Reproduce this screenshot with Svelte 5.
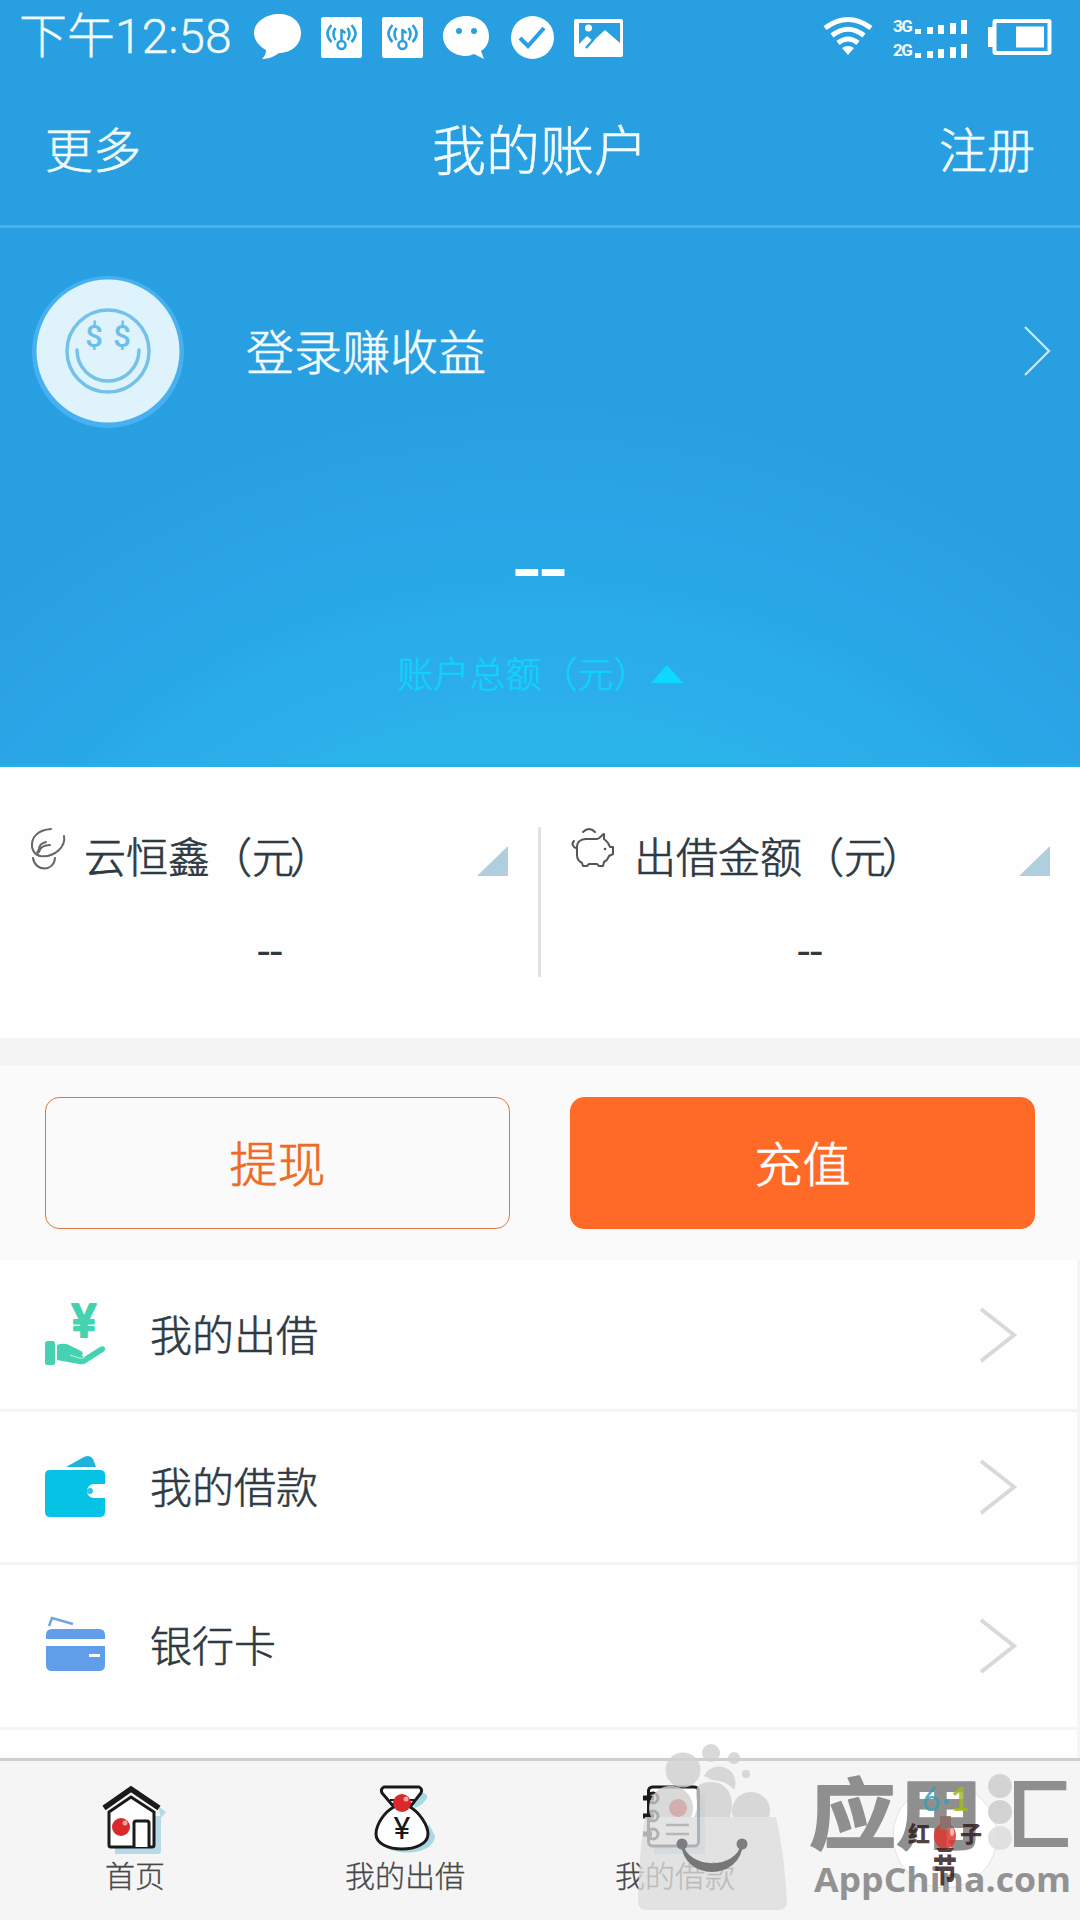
<script>
  const rows = [
    { key: 'lend', label: '我的出借' },
    { key: 'loan', label: '我的借款' },
    { key: 'card', label: '银行卡' }
  ];
  const bars = [5, 7, 9, 11, 14];
</script>

<div class="screen">
  <section class="hero">
    <div class="status">
      <span class="time">下午12:58</span>
      <svg class="notif" viewBox="250 10 376 54" width="376" height="54">
        <g fill="#fff">
          <path d="M279 14c13 0 22 8 22 19s-9 20-22 20c-4 3-10 6-17 6 3-3 4-6 4-9-7-4-12-10-12-17 0-11 12-19 25-19z" />
          <rect x="321" y="17" width="41" height="41" rx="2" />
          <rect x="382" y="17" width="41" height="41" rx="2" />
          <path d="M466 16c14 0 23 9 23 20 0 7-3 12-8 15l3 8-10-5c-3 1-5 2-8 2-13 0-23-9-23-20s10-20 23-20z" />
          <circle cx="532.500" cy="37.500" r="21.500" />
          <path fill-rule="evenodd" d="M576 19h45q2 0 2 2v34q0 2-2 2h-45q-2 0-2-2V21q0-2 2-2zm3 4v21l8-8 6 5 12-11 15 13V23z" />
          <circle cx="588.500" cy="28" r="3.500" />
        </g>
        {#each [341.5, 402.5] as x}
          <g class="hotspot" transform="translate({x} 45)">
            <circle r="4" />
            <path d="M0-4v-12M0-15l4 3M-6-17q-4 6 0 12M6-17q4 6 0 12M-10-20q-8 9 0 17M10-20q8 9 0 17" />
          </g>
        {/each}
        <g fill="#289fe1"><circle cx="459" cy="31" r="3" /><circle cx="474" cy="31" r="3" /></g>
        <path d="M520 38l8 8 16-18" fill="none" stroke="#289fe1" stroke-width="4" />
        <path d="M586 48l8-9" fill="none" stroke="#289fe1" stroke-width="2.500" />
      </svg>
      <svg class="wifi" viewBox="0 0 50 40" width="50" height="40">
        <g fill="none" stroke="#fff" stroke-width="5">
          <path d="M2 11Q25-6 48 11" /><path d="M9 18.500Q25 6 41 18.500" /><path d="M15 26Q25 18 35 26" />
        </g>
        <path d="M19 31q6-4 12 0l-6 7z" fill="#fff" />
      </svg>
      <div class="signals">
        {#each ['3G', '2G'] as net}
          <div class="signal">
            <span>{net}</span>
            {#each bars as h}<i style:height="{h}px"></i>{/each}
          </div>
        {/each}
      </div>
      <svg class="battery" viewBox="0 0 64 36" width="64" height="36">
        <rect x="6.500" y="2" width="55" height="32" rx="1" fill="none" stroke="#fff" stroke-width="4" />
        <path d="M0 8h5v20H0z M28 7.500h28v21H28z" fill="#fff" />
      </svg>
    </div>

    <header>
      <span class="side">更多</span>
      <h1>我的账户</h1>
      <span class="side end">注册</span>
    </header>

    <div class="user">
      <svg viewBox="0 0 156 156" width="156" height="156">
        <circle cx="78" cy="79" r="76" fill="#47b0f0" />
        <circle cx="78" cy="78" r="71.500" fill="#dff3fd" />
        <g fill="none" stroke="#74c2ea" stroke-width="3.500" stroke-linecap="round">
          <circle cx="78" cy="78" r="41" />
          <path d="M47 77a31 31 0 0 0 62 0" />
        </g>
        <g class="dollar"><text x="64" y="74">$</text><text x="92" y="74">$</text></g>
      </svg>
      <span class="login">登录赚收益</span>
      <svg viewBox="0 0 30 52" width="30" height="52"><path d="M2 2l24 24L2 50" fill="none" stroke="#c9eafc" stroke-width="2.200" /></svg>
    </div>

    <div class="total">--</div>
    <div class="total-label">账户总额（元）<i></i></div>
  </section>

  <section class="stats">
    <div class="stat">
      <div class="stat-head">
        <svg viewBox="28 826 46 50" width="46" height="50">
          <g fill="none" stroke="#666" stroke-width="2" stroke-linecap="round">
            <path d="M51 830C38 831 31 838 32 848c1 5 4 8 8 9 15 2 26-10 24-20" />
            <path d="M33 859c2 14 21 14 22 0M46 843c-5 1-7 4-7 8M50 846c-6 0-10 3-11 7M39 850c-3 4-1 7 1 7" />
          </g>
        </svg>
        <span>云恒鑫（<b>元</b>）</span>
      </div>
      <i class="corner"></i>
      <div class="stat-value">--</div>
    </div>
    <div class="stat second">
      <div class="stat-head">
        <svg viewBox="570 826 46 50" width="46" height="50">
          <g fill="none" stroke="#555" stroke-width="2" stroke-linecap="round" stroke-linejoin="round">
            <path d="M577 848c0-6 5-8 9-8h11c3 0 4-4 7-5v5c3 2 5 5 6 8h3v7l-4 2c-1 3-3 5-5 6l-1 4h-4l-2-2h-8l-2 2h-4l-1-3c-4-2-5-5-5-8z" />
            <path d="M583 833q6-6 12 0M574 842c-3 3-1 6 2 7" />
          </g>
          <circle cx="605" cy="850" r="1.300" fill="#555" />
        </svg>
        <span>出借金额（<b>元</b>）</span>
      </div>
      <i class="corner"></i>
      <div class="stat-value">--</div>
    </div>
  </section>

  <section class="actions">
    <button class="outline">提现</button>
    <button class="solid">充值</button>
  </section>

  <section class="list">
    {#each rows as row (row.key)}
      <div class="row {row.key}">
        <svg class="icon" viewBox="0 0 64 64" width="64" height="64">
          {#if row.key === 'lend'}
            <g fill="#44d2b0">
              <text class="yen" x="40" y="34">¥</text>
              <rect x="1" y="38" width="10" height="24" rx="2.500" />
              <path d="M13 42q8-3 14 1l10 5q3 2 1 5l2 1 16-10q4-2 5 1 1 2-2 4L42 60q-3 2-7 1l-22-4z" />
              <path d="M26 52l9 3q4 1 6-1" fill="none" stroke="#bff0e2" stroke-width="1" />
            </g>
          {:else if row.key === 'loan'}
            <path d="M22 14L40 4q6-3 9 2l3 8z" fill="#1fb3dc" />
            <path d="M6 17h50q5 0 5 5v9H50a7 7 0 0 0 0 14h11v14q0 5-5 5H6q-5 0-5-5V22q0-5 5-5z" fill="#05c3e4" />
            <circle cx="46" cy="38" r="3" fill="#2cc6e4" />
          {:else}
            <path d="M5 17l3-8 21 6" fill="none" stroke="#6ea6e8" stroke-width="2.500" />
            <path d="M2 30v-4q0-6 6-6h47q6 0 6 6v4zM2 37h59v19q0 6-6 6H8q-6 0-6-6z" fill="#609eea" />
            <path d="M45 46.500h11" stroke="#fff" stroke-width="3" />
          {/if}
        </svg>
        <span>{row.label}</span>
        <svg viewBox="0 0 40 60" width="40" height="60"><path d="M2 4l33 26L2 56" fill="none" stroke="#d9d9d9" stroke-width="4" /></svg>
      </div>
    {/each}
  </section>

  <nav>
    <div class="tab">
      <svg viewBox="95 1780 80 80" width="80" height="80">
        <path d="M115 1816h46v35q0 3-3 3h-43zM158 1806l8 6-5 6z" fill="#b5d9e6" />
        <path d="M109 1812l22-15 23 15v33q0 2-2 2h-41q-2 0-2-2z" fill="#fff" stroke="#1a1a1a" stroke-width="3" />
        <path d="M104 1808l27-19 28 19" fill="none" stroke="#1a1a1a" stroke-width="5.500" />
        <path d="M134 1847v-24q0-2 2-2h11q2 0 2 2v24" fill="#fff" stroke="#1a1a1a" stroke-width="3" />
        <circle cx="121" cy="1827" r="9" fill="#d9292b" /><circle cx="125" cy="1823" r="2.500" fill="#f4a5a0" />
      </svg>
      <span>首页</span>
    </div>
    <div class="tab">
      <svg viewBox="365 1780 80 80" width="80" height="80">
        <path d="M413 1804l9-11q6 0 5 5-4 7-12 10zM384 1846c12 10 49 10 51-10l-6-12-6 20z" fill="#a9d8e3" />
        <path d="M384 1787h35q4 2 2 6l-11 14c9 5 18 18 18 27 0 20-52 20-52 0 0-9 8-22 18-27l-12-14q-2-4 2-6z" fill="#fff" stroke="#1a1a1a" stroke-width="3" />
        <path d="M390 1800h24M390 1804h24" stroke="#1a1a1a" stroke-width="2" />
        <circle cx="402" cy="1803" r="9" fill="#d9292b" /><circle cx="406" cy="1799" r="2.500" fill="#f4a5a0" />
        <text class="bag-yen" x="402" y="1839">¥</text>
      </svg>
      <span>我的出借</span>
    </div>
    <div class="tab">
      <svg viewBox="635 1780 80 80" width="80" height="80">
        <path d="M654 1795h51v59h-51z" fill="#bcdcec" />
        <rect x="648.500" y="1787" width="50" height="59" rx="4" fill="#fff" stroke="#1a1a1a" stroke-width="3" />
        <circle cx="678" cy="1808" r="9" fill="#d9292b" />
        <path d="M666 1825h23M666 1834h23" stroke="#333" stroke-width="2.500" />
        <g fill="#fff" stroke="#1a1a1a" stroke-width="3"><circle cx="653" cy="1798" r="5" /><circle cx="653" cy="1816" r="5" /><circle cx="653" cy="1834" r="5" /></g>
        <path d="M643 1798h11M643 1816h11M643 1834h9" stroke="#1a1a1a" stroke-width="5" />
      </svg>
      <span>我的借款</span>
    </div>
    <div class="tab fest">
      <svg viewBox="885 1770 120 150" width="120" height="150">
        <circle cx="945" cy="1836" r="52" fill="#fff" stroke="#e3e3e3" />
      </svg>
    </div>
  </nav>

  <!-- Store badge and festival emblem lying over the tab bar -->
  <svg class="mark" viewBox="638 1740 442 180" width="442" height="180">
    <defs>
      <linearGradient id="fade"><stop offset="0.340" stop-color="#8f8f8f" stop-opacity="0" /><stop offset="0.340" stop-color="#8f8f8f" /></linearGradient>
    </defs>
    <g fill="#cfcfcf" fill-opacity=".8">
      <circle cx="683" cy="1770" r="17.500" /><circle cx="711" cy="1753" r="9" /><circle cx="734" cy="1758" r="6" /><circle cx="746" cy="1774" r="4" />
      <path d="M704 1776a16 16 0 0 1 30 14q-8-10-22-10z" />
      <path d="M651 1817a22 22 0 1 1 40 0zM694 1817q5-8 2-21c-1-10 4-14 15-14 20 0 24 20 19 35zM733 1817a19 19 0 1 1 36 0z" />
    </g>
    <path d="M645 1817h131q8 35 11 84 0 9-9 9H647q-9 0-9-9 1-49 7-84z" fill="#dcdcdc" fill-opacity=".78" />
    <path d="M682 1844c3 36 57 36 60 0-5 27-54 27-60 0z" fill="#777" stroke="#777" stroke-width="2" />
    <g fill="#7d7d7d"><circle cx="682" cy="1844" r="5.500" /><circle cx="742" cy="1844" r="5.500" /></g>
    <g fill="#cfcfcf" fill-opacity=".9"><circle cx="1000" cy="1786" r="12" /><circle cx="1000" cy="1812" r="12" /><circle cx="1000" cy="1838" r="12" fill="#dedede" /></g>
    <g class="brand" transform="translate(0 1843) scale(1 .89)">
      <text x="809" y="0">应</text>
      <text x="896" y="0">用</text>
      <text x="984" y="0" class="last">汇</text>
    </g>
    <text class="site" x="814" y="1892" textLength="257" lengthAdjust="spacingAndGlyphs">AppChina.com</text>
    <g opacity=".85">
      <text class="six" x="931" y="1811">6</text>
      <text class="six dot" x="946" y="1811">·</text>
      <text class="one" x="960" y="1811">1</text>
      <text class="kid" x="919" y="1842">红</text>
      <text class="kid" x="971" y="1842">子</text>
      <ellipse cx="945" cy="1836" rx="11" ry="13" fill="#dc3731" />
      <path d="M940 1816h11v14h-11z" fill="#8b6b68" />
      <ellipse cx="952" cy="1832" rx="2" ry="4" fill="#f6b0a8" />
      <path d="M936 1848l3 4h12l3-4z" fill="#42201f" />
      <text class="kid big" transform="translate(945 1882) scale(.85 1.150)">节</text>
    </g>
  </svg>
</div>

<style>
  :global(body) { margin: 0; background: #fff; }
  .screen {
    position: relative;
    width: 1080px;
    height: 1920px;
    overflow: hidden;
    display: flex;
    flex-direction: column;
    background: #fefefe;
    font-family: Roboto, 'Noto Sans CJK SC', sans-serif;
    font-weight: 300;
    color: #2e3a42;
  }
  svg { display: block; flex: none; overflow: visible; }
  .hero {
    height: 767px;
    box-sizing: border-box;
    border-bottom: 3px solid #25b0e8;
    color: #f2fbff;
    background: radial-gradient(circle at 540px 1250px, #2bb4ea 530px, #2caeeb 560px, #2bacea 640px, #28a8e6 670px, #2ba4e6 740px, #289fe1 850px);
    display: flex;
    flex-direction: column;
  }
  .status { height: 74px; display: flex; align-items: center; padding: 0 28px 0 19px; }
  .time { flex: none; width: 231px; font-size: 48px; line-height: 70px; white-space: nowrap; -webkit-text-stroke: 0.4px currentColor; }
  .notif { margin-right: 197px; }
  .hotspot circle, .hotspot path { fill: none; stroke: #289fe1; stroke-width: 2.5; }
  .signals { flex: none; width: 74px; display: flex; flex-direction: column; gap: 9px; margin: 3px 21px 0 20px; }
  .signal { display: flex; align-items: flex-end; justify-content: space-between; height: 15px; }
  .signal span { width: 17px; font-size: 17px; line-height: 15px; font-weight: 700; letter-spacing: -1.5px; }
  .signal i { flex: none; width: 6px; background: #fff; }
  header { height: 151px; display: flex; align-items: center; padding: 0 45px; border-bottom: 3px solid #4db0ea; }
  .side { flex: 1; padding-bottom: 5px; font-size: 48px; -webkit-text-stroke: 0.6px currentColor; }
  .end { text-align: right; }
  h1 { margin: 0; padding-bottom: 5px; font-size: 54px; font-weight: 300; -webkit-text-stroke: 0.6px currentColor; }
  .user { height: 246px; display: flex; align-items: center; padding: 0 27px 0 30px; }
  .login { flex: 1; margin-left: 60px; padding-bottom: 5px; font-size: 48px; -webkit-text-stroke: 0.6px currentColor; }
  .dollar { fill: #6bbfe8; font: 500 31px Roboto, sans-serif; text-anchor: middle; }
  .total { height: 112px; margin-top: 39px; font-size: 95px; line-height: 112px; font-weight: 400; text-align: center; color: #fff; }
  .total-label { display: flex; align-items: center; justify-content: center; height: 54px; margin-top: 20px; font-size: 36px; color: #10d2fb; -webkit-text-stroke: 0.5px currentColor; }
  .total-label i { margin: 3px 0 0 1px; border: solid transparent; border-width: 0 16px 18px; border-bottom-color: #0fd8ff; }
  .stats { height: 271px; display: grid; grid-template-columns: 540px 540px; border-bottom: 28px solid #f4f4f4; }
  .stat { position: relative; padding-top: 55px; }
  .stat-head { display: flex; align-items: center; height: 64px; padding-left: 28px; font-size: 42px; font-weight: 300; -webkit-text-stroke: 0.7px currentColor; }
  .stat-head svg { margin: -8px 10px 0 0; }
  .second .stat-head { padding-left: 30px; }
  .second .stat-head svg { margin-right: 18px; }
  .stat-head b { font-weight: inherit; letter-spacing: -4px; }
  .corner { position: absolute; right: 32px; top: 79px; border: solid transparent; border-width: 0 0 30px 31px; border-bottom-color: #afcfdf; }
  .second .corner { right: 30px; }
  .stat-value { margin-top: 40px; height: 52px; line-height: 52px; text-align: center; font-size: 45px; font-weight: 400; }
  .second::before { content: ''; position: absolute; left: -2px; top: 60px; width: 3px; height: 150px; background: #e2e2e2; }
  .actions { height: 194px; box-sizing: border-box; padding: 31px 45px 0; display: flex; gap: 60px; background: #fafafa; }
  button { flex: 1; height: 132px; padding: 0 0 5px; border: 1.5px solid #e0763f; border-radius: 14px; background: none; color: #ee6a28; font: 300 48px 'Noto Sans CJK SC', sans-serif; -webkit-text-stroke: 0.7px currentColor; }
  .solid { background: #ff6a26; border-color: #ff6a26; color: #fff; }
  .list { flex: 1; width: 1077px; border-right: 3px solid #f5f5f5; overflow: hidden; }
  .row { box-sizing: border-box; height: 152px; display: flex; align-items: center; padding: 0 58px 0 44px; border-bottom: 3px solid #f4f4f4; font-size: 42px; }
  .row.loan { height: 153px; }
  .row.card { height: 165px; }
  .row span { flex: 1; margin-left: 42px; padding-bottom: 5px; -webkit-text-stroke: 0.6px currentColor; }
  .loan .icon { margin-bottom: 5px; }
  .card .icon { margin-bottom: 11px; }
  .yen { font: 500 46px Roboto, sans-serif; text-anchor: middle; stroke: #44d2b0; stroke-width: 2; stroke-linejoin: round; }
  nav { height: 162px; box-sizing: border-box; display: grid; grid-template-columns: repeat(4, 1fr); background: #f5f5f5; border-top: 3px solid #cfcfcf; }
  .tab { display: flex; flex-direction: column; align-items: center; padding-top: 19px; font-size: 30px; line-height: 34px; color: #484848; -webkit-text-stroke: 0.3px currentColor; }
  .tab svg, .mark { -webkit-text-stroke: 0; }
  .fest { padding-top: 9px; }
  .bag-yen { font: 400 32px Roboto, sans-serif; text-anchor: middle; fill: #1a1a1a; }
  .six, .one { font: 400 32px Lato, sans-serif; text-anchor: middle; fill: #3c9cb8; }
  .one { fill: #a5b81e; font-weight: 700; }
  .kid { font: 900 22px 'Noto Sans CJK SC', sans-serif; text-anchor: middle; fill: #33201f; }
  .big { font-size: 28px; }
  .mark { position: absolute; left: 638px; top: 1740px; }
  .brand text { font: 700 87px 'Noto Sans CJK SC', sans-serif; fill: #8f8f8f; stroke: #8f8f8f; stroke-width: 2; stroke-linejoin: round; }
  .brand .last { fill: url(#fade); stroke: none; }
  .site { font: 700 34px 'Open Sans', sans-serif; fill: #929292; }
</style>
